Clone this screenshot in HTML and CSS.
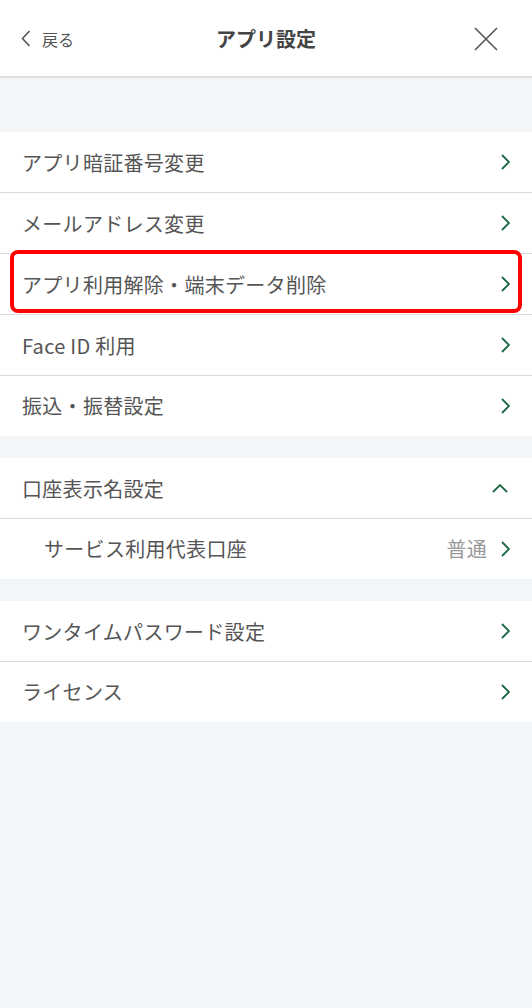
FILE: index.html
```html
<!DOCTYPE html>
<html lang="ja">
<head>
<meta charset="utf-8">
<title>アプリ設定</title>
<link rel="stylesheet" href="styles.css">
</head>
<body>
<header class="topbar">
  <div class="back">
    <svg class="back-icon" width="10" height="17" viewBox="0 0 10 17"><path d="M8.5 1 L1.5 8.5 L8.5 16" fill="none" stroke="#555" stroke-width="1.6"/></svg>
    <span>戻る</span>
  </div>
  <h1 class="title">アプリ設定</h1>
  <div class="close">
    <svg width="24" height="24" viewBox="0 0 24 24"><path d="M1 1 L23 23 M23 1 L1 23" fill="none" stroke="#555" stroke-width="1.6"/></svg>
  </div>
</header>

<main class="settings">
  <section class="group">
    <div class="row"><span class="label">アプリ暗証番号変更</span><svg class="chev" width="9" height="16" viewBox="0 0 9 16"><path d="M1 1 L8 8 L1 15" fill="none" stroke="#1d6a45" stroke-width="1.8"/></svg></div>
    <div class="row"><span class="label">メールアドレス変更</span><svg class="chev" width="9" height="16" viewBox="0 0 9 16"><path d="M1 1 L8 8 L1 15" fill="none" stroke="#1d6a45" stroke-width="1.8"/></svg></div>
    <div class="row highlighted"><span class="label">アプリ利用解除・端末データ削除</span><svg class="chev" width="9" height="16" viewBox="0 0 9 16"><path d="M1 1 L8 8 L1 15" fill="none" stroke="#1d6a45" stroke-width="1.8"/></svg><span class="mark"></span></div>
    <div class="row"><span class="label">Face ID 利用</span><svg class="chev" width="9" height="16" viewBox="0 0 9 16"><path d="M1 1 L8 8 L1 15" fill="none" stroke="#1d6a45" stroke-width="1.8"/></svg></div>
    <div class="row"><span class="label">振込・振替設定</span><svg class="chev" width="9" height="16" viewBox="0 0 9 16"><path d="M1 1 L8 8 L1 15" fill="none" stroke="#1d6a45" stroke-width="1.8"/></svg></div>
  </section>

  <section class="group">
    <div class="row row-expand"><span class="label">口座表示名設定</span><svg class="chev-up" width="16" height="9" viewBox="0 0 16 9"><path d="M1 8 L8 1 L15 8" fill="none" stroke="#1d6a45" stroke-width="1.8"/></svg></div>
    <div class="row row-sub"><span class="label">サービス利用代表口座</span><span class="value">普通</span><svg class="chev" width="9" height="16" viewBox="0 0 9 16"><path d="M1 1 L8 8 L1 15" fill="none" stroke="#1d6a45" stroke-width="1.8"/></svg></div>
  </section>

  <section class="group">
    <div class="row"><span class="label">ワンタイムパスワード設定</span><svg class="chev" width="9" height="16" viewBox="0 0 9 16"><path d="M1 1 L8 8 L1 15" fill="none" stroke="#1d6a45" stroke-width="1.8"/></svg></div>
    <div class="row"><span class="label">ライセンス</span><svg class="chev" width="9" height="16" viewBox="0 0 9 16"><path d="M1 1 L8 8 L1 15" fill="none" stroke="#1d6a45" stroke-width="1.8"/></svg></div>
  </section>
</main>
</body>
</html>
```

FILE: styles.css
```css
* { box-sizing: border-box; }

html, body {
  margin: 0;
  padding: 0;
}

body {
  background: #f3f6f9;
  min-height: 1008px;
  font-family: "Noto Sans CJK JP", "Noto Sans", sans-serif;
  color: #555;
}

.topbar {
  height: 78px;
  background: #fff;
  border-bottom: 2px solid #dedede;
  display: grid;
  grid-template-columns: 1fr auto 1fr;
  align-items: center;
}

.back {
  display: flex;
  align-items: center;
  gap: 11px;
  padding-left: 21px;
  font-size: 16px;
  color: #555;
  padding-top: 1px;
}

.back-icon { display: block; }

.title {
  margin: 0;
  font-size: 20px;
  font-weight: 700;
  color: #444;
}

.close {
  display: flex;
  justify-content: flex-end;
  padding-right: 34px;
  padding-top: 1px;
}

.close svg { display: block; }

.settings {
  padding-top: 54px;
  display: flex;
  flex-direction: column;
  gap: 22px;
}

.group {
  background: #fff;
}

.row {
  position: relative;
  display: flex;
  align-items: center;
  height: 61px;
  padding: 0 22px 0 22px;
  font-size: 20px;
  letter-spacing: 0.3px;
  color: #555;
  border-bottom: 1px solid #d9d9d9;
}

.row:last-child {
  border-bottom-color: #fff;
  height: 60px;
}

.label {
  flex: 1;
  white-space: nowrap;
}

.chev { display: block; flex: none; }

.chev-up { display: block; flex: none; margin-right: 2px; }

.row-sub { padding-left: 44px; }

.value {
  color: #9a9a9a;
  margin-right: 14px;
}

.mark {
  position: absolute;
  left: 10px;
  right: 10px;
  top: -4px;
  bottom: 1px;
  border: 4px solid #ff0000;
  border-radius: 8px;
  pointer-events: none;
}
```
